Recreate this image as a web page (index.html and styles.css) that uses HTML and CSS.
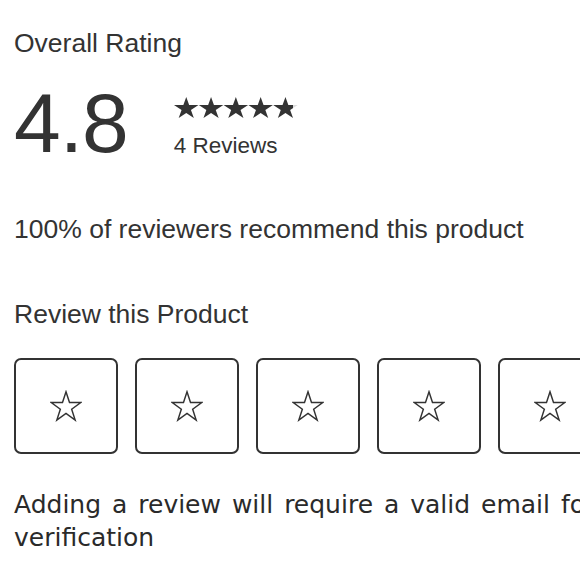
FILE: index.html
```html
<!DOCTYPE html>
<html>
<head>
  <link rel="stylesheet" href="styles.css">
</head>
<body>
  <div class="reviews">
    <h2 class="title">Overall Rating</h2>

    <div class="summary">
      <div class="score">4.8</div>
      <div class="summary-side">
        <svg class="stars" width="124" height="21" viewBox="0 0 124 23.34" preserveAspectRatio="none">
          <defs>
            <polygon id="star" points="12.25,0 15.15,8.91 24.5,8.91 16.94,14.42 19.83,23.34 12.25,17.83 4.67,23.34 7.56,14.42 0,8.91 9.35,8.91"/>
            <linearGradient id="part">
              <stop offset="0.8" stop-color="#333"/>
              <stop offset="0.8" stop-color="#ddd"/>
            </linearGradient>
          </defs>
          <use href="#star" fill="#333"/>
          <use href="#star" fill="#333" x="24.8"/>
          <use href="#star" fill="#333" x="49.6"/>
          <use href="#star" fill="#333" x="74.4"/>
          <use href="#star" fill="url(#part)" x="99.2"/>
        </svg>
        <div class="count">4 Reviews</div>
      </div>
    </div>

    <p class="recommend">100% of reviewers recommend this product</p>

    <h2 class="title">Review this Product</h2>

    <div class="picker">
      <button class="pick"><svg width="32" height="32" viewBox="-1 -1.5 26.5 26.5"><use href="#star"/></svg></button>
      <button class="pick"><svg width="32" height="32" viewBox="-1 -1.5 26.5 26.5"><use href="#star"/></svg></button>
      <button class="pick"><svg width="32" height="32" viewBox="-1 -1.5 26.5 26.5"><use href="#star"/></svg></button>
      <button class="pick"><svg width="32" height="32" viewBox="-1 -1.5 26.5 26.5"><use href="#star"/></svg></button>
      <button class="pick"><svg width="32" height="32" viewBox="-1 -1.5 26.5 26.5"><use href="#star"/></svg></button>
    </div>

    <p class="note">Adding a review will require a valid email for verification</p>
  </div>
</body>
</html>
```

FILE: styles.css
```css
body {
  margin: 0;
  overflow: hidden;
  background-color: #fff;
  color: #333;
  font-family: "Liberation Sans", Arial, sans-serif;
}

.reviews {
  width: 620px;
  padding: 28px 0 0 14px;
}

.title {
  margin: 0;
  font-size: 26.5px;
  font-weight: normal;
  line-height: 30px;
}

.summary {
  display: flex;
  align-items: flex-start;
  gap: 46px;
  margin-top: 23px;
}

.score {
  font-size: 84px;
  line-height: 84px;
  letter-spacing: -1px;
}

.summary-side {
  display: flex;
  flex-direction: column;
  gap: 15px;
  padding-top: 16px;
}

.stars {
  display: block;
}

.count {
  font-size: 22.5px;
  line-height: 26px;
}

.recommend {
  margin: 49px 0 55px;
  font-size: 26.5px;
  line-height: 30px;
}

.picker {
  display: flex;
  gap: 17px;
  margin-top: 29px;
}

.pick {
  flex: none;
  display: flex;
  align-items: center;
  justify-content: center;
  width: 104px;
  height: 96px;
  padding: 0;
  background-color: #fff;
  border: 2px solid #333;
  border-radius: 7px;
}

.pick svg {
  fill: none;
  stroke: #333;
  stroke-width: 1.2;
}

.note {
  margin: 34px 0 0;
  font-family: "DejaVu Sans", sans-serif;
  font-size: 25px;
  line-height: 33px;
  word-spacing: 3px;
  color: #2a2a2a;
}
```
